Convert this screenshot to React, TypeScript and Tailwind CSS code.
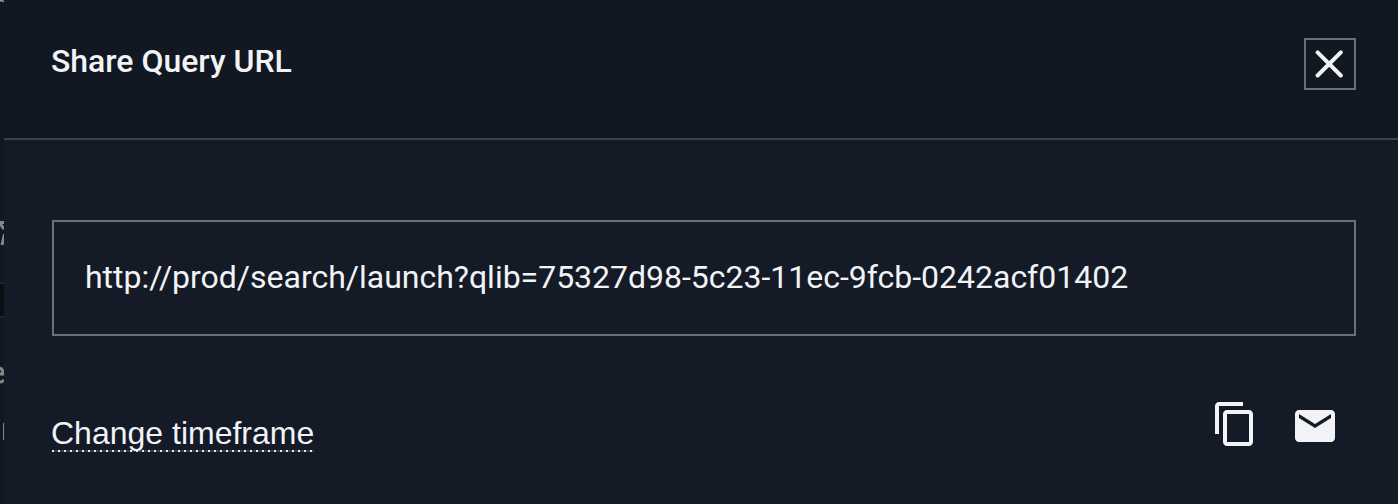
export default function App() {
  return (
    <div className="flex h-[504px] w-[1398px] overflow-hidden bg-[#151b26] font-['Roboto',sans-serif] text-[#f1f3f7]">
      <aside aria-hidden="true" className="w-1 shrink-0 overflow-hidden bg-[#12161f] text-[#777a80]">
        <svg width="4" height="504" viewBox="0 0 4 504" fill="none">
          <path d="M0 0.7H2L4 1.5" stroke="#9b9da0" strokeWidth="1.5" />
          <path d="M0 222.5H4M0 223.5L4 229M4.5 234L2 245" stroke="#85878b" strokeWidth="3" />
          <path d="M0 284H4V316H0Z" fill="#0b0d12" />
          <path d="M0 283H4M0 317H4" stroke="#1b2431" strokeWidth="2" />
          <path d="M0 368Q3 369 3 374H0M0 382Q2 382 4 380" stroke="#85878b" strokeWidth="3" />
          <path d="M3.5 423V440" stroke="#85878b" />
        </svg>
      </aside>
      <main className="flex min-w-0 flex-1 flex-col">
        <header className="flex h-[140px] shrink-0 justify-between border-b-2 border-[#3c414c] bg-[#121822] pt-[38px] pr-[42px] pl-[47px]">
          <h1 className="pt-1 text-[32px] leading-[38px] font-medium tracking-[-0.02px]">Share Query URL</h1>
          <button aria-label="Close" className="flex size-[52px] items-center justify-center border-2 border-[#6c6f79] pr-0.5">
            <svg width="28" height="28" viewBox="0 0 28 28" stroke="currentColor" strokeWidth="4" strokeLinecap="round"><path d="M2.6 2.3L25.8 25.5M25.8 2.3L2.6 25.5" /></svg>
          </button>
        </header>
        <section className="pt-20 pr-[42px] pl-12">
          <div className="flex h-[116px] items-center border-2 border-[#6c6f79] px-[31px] pb-0.5 text-[32px] tracking-[-0.01px]">http://prod/search/launch?qlib=75327d98-5c23-11ec-9fcb-0242acf01402</div>
          <div className="flex justify-between">
            <a className="mt-[78px] h-[38px] w-[262px] bg-[repeating-linear-gradient(90deg,#e9ebef_0_2px,#363c47_2px_6px)] bg-[length:100%_2px] bg-bottom bg-no-repeat font-['Liberation_Sans',sans-serif] text-[32px] leading-[38px] whitespace-nowrap -indent-px">Change timeframe</a>
            <div className="flex gap-8 pt-[66px] pr-[17px]">
              <svg className="-mt-0.5" width="48" height="48" viewBox="0 0 24 24" fill="currentColor"><path d="M16 1H4c-1.1 0-2 .9-2 2v14h2V3h12V1zm3 4H8c-1.1 0-2 .9-2 2v14c0 1.1.9 2 2 2h11c1.1 0 2-.9 2-2V7c0-1.1-.9-2-2-2zm0 16H8V7h11v14z" /></svg>
              <svg width="48" height="48" viewBox="0 0 24 24" fill="currentColor"><path d="M20 4H4c-1.1 0-1.99.9-1.99 2L2 18c0 1.1.9 2 2 2h16c1.1 0 2-.9 2-2V6c0-1.1-.9-2-2-2zm0 4l-8 5-8-5V6l8 5 8-5v2z" /></svg>
            </div>
          </div>
        </section>
      </main>
    </div>
  );
}
